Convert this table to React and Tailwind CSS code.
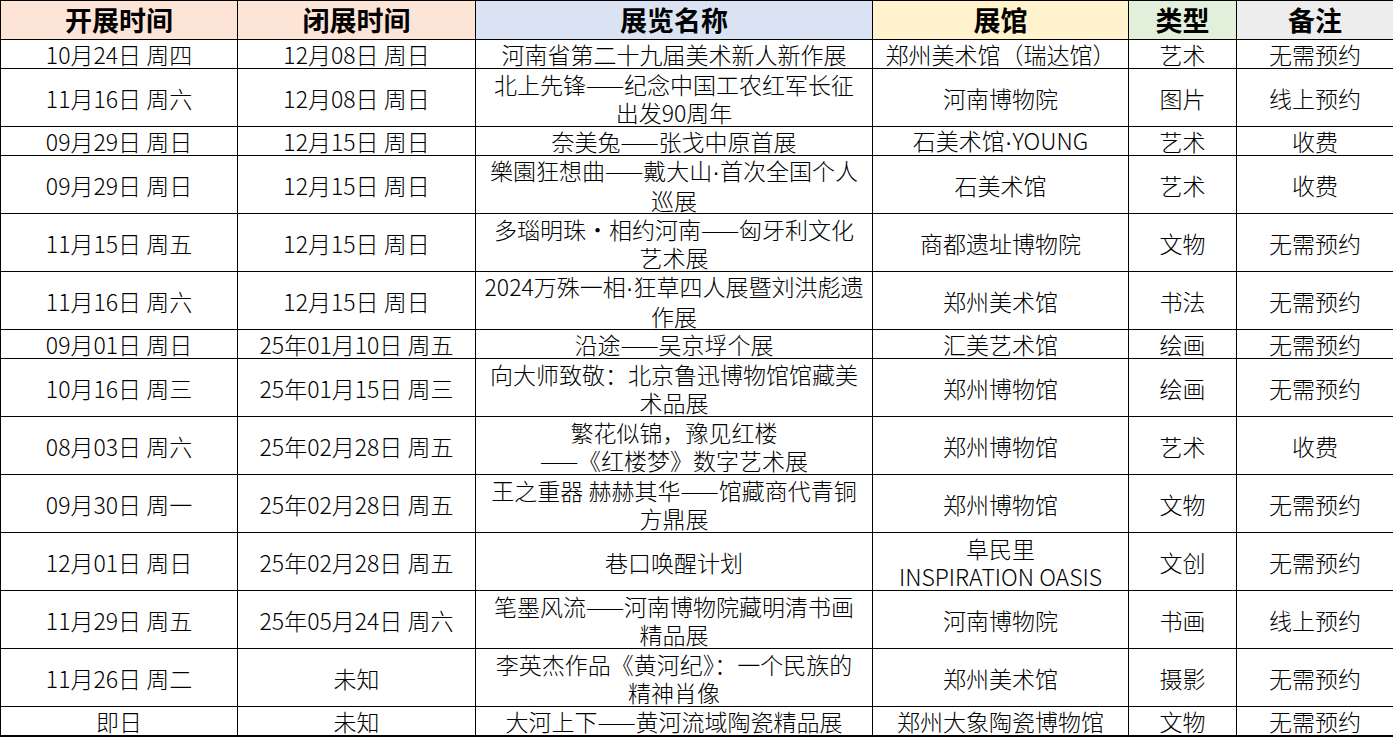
import React from "react";

const headers = [
  { label: "开展时间", bg: "bg-[#fce4d6]" },
  { label: "闭展时间", bg: "bg-[#fce4d6]" },
  { label: "展览名称", bg: "bg-[#dae3f3]" },
  { label: "展馆", bg: "bg-[#fff2cc]" },
  { label: "类型", bg: "bg-[#e2efda]" },
  { label: "备注", bg: "bg-[#ededed]" },
];

// narrow latin middle dot, like the sheet shows
const Dot = () => <span className="font-['Liberation_Sans',sans-serif]">·</span>;

// each row: [start, end, name lines, venue lines, type, note, tall]
const rows = [
  ["10月24日 周四", "12月08日 周日", ["河南省第二十九届美术新人新作展"], ["郑州美术馆（瑞达馆）"], "艺术", "无需预约", false],
  ["11月16日 周六", "12月08日 周日", ["北上先锋——纪念中国工农红军长征", "出发90周年"], ["河南博物院"], "图片", "线上预约", true],
  ["09月29日 周日", "12月15日 周日", ["奈美兔——张戈中原首展"], [<>石美术馆<Dot />YOUNG</>], "艺术", "收费", false],
  ["09月29日 周日", "12月15日 周日", [<>樂園狂想曲——戴大山<Dot />首次全国个人</>, "巡展"], ["石美术馆"], "艺术", "收费", true],
  ["11月15日 周五", "12月15日 周日", ["多瑙明珠・相约河南——匈牙利文化", "艺术展"], ["商都遗址博物院"], "文物", "无需预约", true],
  ["11月16日 周六", "12月15日 周日", [<>2024万殊一相<Dot />狂草四人展暨刘洪彪遗</>, "作展"], ["郑州美术馆"], "书法", "无需预约", true],
  ["09月01日 周日", "25年01月10日 周五", ["沿途——吴京垺个展"], ["汇美艺术馆"], "绘画", "无需预约", false],
  ["10月16日 周三", "25年01月15日 周三", ["向大师致敬：北京鲁迅博物馆馆藏美", "术品展"], ["郑州博物馆"], "绘画", "无需预约", true],
  ["08月03日 周六", "25年02月28日 周五", ["繁花似锦，豫见红楼", "——《红楼梦》数字艺术展"], ["郑州博物馆"], "艺术", "收费", true],
  ["09月30日 周一", "25年02月28日 周五", ["王之重器 赫赫其华——馆藏商代青铜", "方鼎展"], ["郑州博物馆"], "文物", "无需预约", true],
  ["12月01日 周日", "25年02月28日 周五", ["巷口唤醒计划"], ["阜民里", "INSPIRATION OASIS"], "文创", "无需预约", true],
  ["11月29日 周五", "25年05月24日 周六", ["笔墨风流——河南博物院藏明清书画", "精品展"], ["河南博物院"], "书画", "线上预约", true],
  ["11月26日 周二", "未知", ["李英杰作品《黄河纪》：一个民族的", "精神肖像"], ["郑州美术馆"], "摄影", "无需预约", true],
  ["即日", "未知", ["大河上下——黄河流域陶瓷精品展"], ["郑州大象陶瓷博物馆"], "文物", "无需预约", false],
];

function Cell({ lines, first, last, tall }) {
  const list = Array.isArray(lines) ? lines : [lines];
  return (
    <div
      className={
        "flex flex-col items-center justify-center text-center whitespace-nowrap border-r border-black leading-[28px] " +
        (first ? "border-l " : "") +
        (last ? "border-b-2 h-[30px] " : "border-b " + (tall ? "h-[58px] " : "h-[29px] "))
      }
    >
      {list.map((t, i) => (
        <div key={i}>{t}</div>
      ))}
    </div>
  );
}

export default function App() {
  return (
    <div className="w-[1393px] h-[737px] overflow-hidden bg-white font-['Noto_Sans_CJK_SC',sans-serif] text-black">
      <div className="grid grid-cols-[238px_238px_397px_256px_108px_157px] w-[1394px]">
        {headers.map((h, i) => (
          <div
            key={h.label}
            className={
              "flex items-center justify-center h-[40px] border-t border-b border-r border-black text-[27px] font-bold " +
              h.bg +
              (i === 0 ? " border-l" : "")
            }
          >
            {h.label}
          </div>
        ))}
        {rows.map((r, ri) => {
          const last = ri === rows.length - 1;
          const tall = r[6];
          return (
            <React.Fragment key={ri}>
              {r.slice(0, 6).map((c, ci) => (
                <div key={ci} className="text-[23px] font-light">
                  <Cell lines={c} first={ci === 0} last={last} tall={tall} />
                </div>
              ))}
            </React.Fragment>
          );
        })}
      </div>
    </div>
  );
}
